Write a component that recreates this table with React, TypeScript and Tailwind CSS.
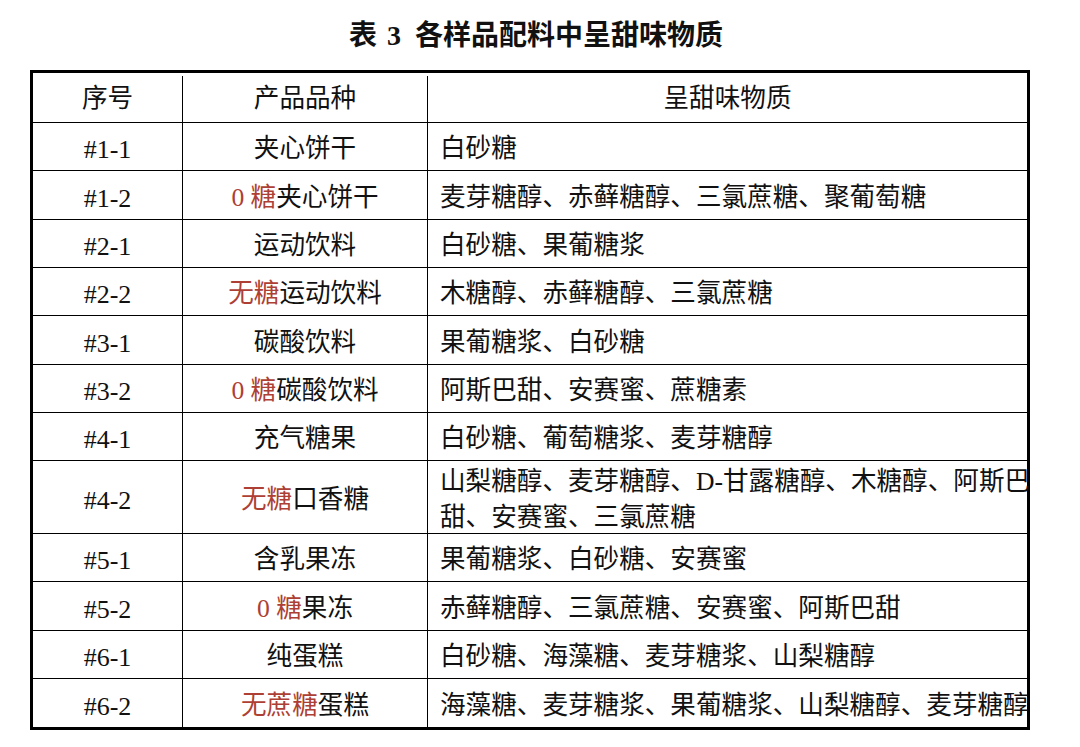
import React from "react";

type Row = {
  id: string;
  red?: string;
  name: string;
  content: React.ReactNode;
  h: string;
  last?: boolean;
};

const rows: Row[] = [
  { id: "#1-1", name: "夹心饼干", content: "白砂糖", h: "h-[48px]" },
  { id: "#1-2", red: "0 糖", name: "夹心饼干", content: "麦芽糖醇、赤藓糖醇、三氯蔗糖、聚葡萄糖", h: "h-[49px]" },
  { id: "#2-1", name: "运动饮料", content: "白砂糖、果葡糖浆", h: "h-[48px]" },
  { id: "#2-2", red: "无糖", name: "运动饮料", content: "木糖醇、赤藓糖醇、三氯蔗糖", h: "h-[48px]" },
  { id: "#3-1", name: "碳酸饮料", content: "果葡糖浆、白砂糖", h: "h-[49px]" },
  { id: "#3-2", red: "0 糖", name: "碳酸饮料", content: "阿斯巴甜、安赛蜜、蔗糖素", h: "h-[48px]" },
  { id: "#4-1", name: "充气糖果", content: "白砂糖、葡萄糖浆、麦芽糖醇", h: "h-[48px]" },
  {
    id: "#4-2",
    red: "无糖",
    name: "口香糖",
    content: (
      <span className="leading-[36px]">
        山梨糖醇、麦芽糖醇、D-甘露糖醇、木糖醇、阿斯巴
        <br />
        甜、安赛蜜、三氯蔗糖
      </span>
    ),
    h: "h-[73px]",
  },
  { id: "#5-1", name: "含乳果冻", content: "果葡糖浆、白砂糖、安赛蜜", h: "h-[48px]" },
  { id: "#5-2", red: "0 糖", name: "果冻", content: "赤藓糖醇、三氯蔗糖、安赛蜜、阿斯巴甜", h: "h-[49px]" },
  { id: "#6-1", name: "纯蛋糕", content: "白砂糖、海藻糖、麦芽糖浆、山梨糖醇", h: "h-[48px]" },
  { id: "#6-2", red: "无蔗糖", name: "蛋糕", content: "海藻糖、麦芽糖浆、果葡糖浆、山梨糖醇、麦芽糖醇", h: "h-[48px]", last: true },
];

export default function App() {
  return (
    <div
      className="w-[1080px] h-[747px] bg-white text-[#111111] overflow-hidden"
      style={{ fontFamily: '"Liberation Serif", "Noto Sans CJK SC", sans-serif' }}
    >
      <div className="flex justify-center pt-[16px] pr-[8px] h-[70px]">
        <div className="text-[28px] font-bold leading-[40px]">
          表<span className="ml-[10px] mr-[14px]">3</span>各样品配料中呈甜味物质
        </div>
      </div>
      <div className="mx-[30px] w-[1000px] border-[3px] border-black flex flex-col">
        <div className="flex h-[50px] border-b border-black text-[25.6px] pt-[3px]">
          <div className="w-[150px] shrink-0 border-r border-black flex items-center justify-center">序号</div>
          <div className="w-[245px] shrink-0 border-r border-black flex items-center justify-center">产品品种</div>
          <div className="flex-1 flex items-center justify-center">呈甜味物质</div>
        </div>
        {rows.map((r) => (
          <div
            key={r.id}
            className={`flex ${r.h} ${r.last ? "" : "border-b border-black"} text-[25.6px]`}
          >
            <div className="w-[150px] shrink-0 border-r border-black flex items-center justify-center text-[26px] pt-[6px]">
              {r.id}
            </div>
            <div className="w-[245px] shrink-0 border-r border-black flex items-center justify-center pt-[6px]">
              {r.red && <span className="text-[#ad3f35]">{r.red}</span>}
              <span>{r.name}</span>
            </div>
            <div className="flex-1 flex items-center pl-[12px] pt-[6px] whitespace-nowrap">{r.content}</div>
          </div>
        ))}
      </div>
    </div>
  );
}
